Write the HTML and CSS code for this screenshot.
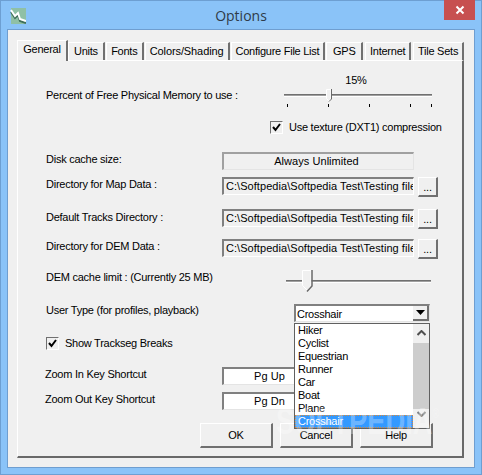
FILE: index.html
```html
<!DOCTYPE html>
<html lang="en">
<head>
  <meta charset="UTF-8">
  <title>Options</title>
  <link rel="stylesheet" href="styles.css">
</head>
<body>
  <div class="window">
    <!-- title bar -->
    <div class="titlebar">
      <svg class="app-icon" width="16" height="17" viewBox="0 0 16 17">
        <rect x="1" y="1" width="15" height="16" fill="#8fc0a6"/>
        <path d="M1 5 L5 11 L8 8 L10 14 L16 16" fill="none" stroke="#3f6f5a" stroke-width="2"/>
        <path d="M1 3 L5 9 L8 6 L10 12 L16 14" fill="none" stroke="#fff" stroke-width="2"/>
      </svg>
      <div class="title">Options</div>
      <div class="close">
        <svg width="10" height="10" viewBox="0 0 10 10"><path d="M1.5 1.5 L8.5 8.5 M8.5 1.5 L1.5 8.5" stroke="#fff" stroke-width="2"/></svg>
      </div>
    </div>
    <div class="client">
      <!-- tabs -->
      <div class="tabs">
        <div class="tab tab-active tab-general">General</div>
        <div class="tab tab-units">Units</div>
        <div class="tab tab-fonts">Fonts</div>
        <div class="tab tab-colors">Colors/Shading</div>
        <div class="tab tab-config">Configure File List</div>
        <div class="tab tab-gps">GPS</div>
        <div class="tab tab-internet">Internet</div>
        <div class="tab tab-tiles">Tile Sets</div>
      </div>
      <!-- general page -->
      <div class="panel">
        <div class="row row-memory">
          <span class="label label-memory">Percent of Free Physical Memory to use :</span>
          <div class="memory">
            <div class="percent">15%</div>
            <div class="slider slider-small">
              <div class="track"></div>
              <svg class="thumb thumb-small" width="6" height="13" viewBox="0 0 6 13">
                <path d="M0.5 0.5 H5 V9.5 L3 12 L0.5 9.5 Z" fill="#f0f0f0" stroke="#fff"/>
                <path d="M5.5 0 V10 L3 12.5" fill="none" stroke="#696969"/>
              </svg>
            </div>
            <div class="ticks"><i></i><i></i><i></i><i></i><i></i></div>
          </div>
        </div>
        <label class="check check-texture"><span class="box">
          <svg width="9" height="9" viewBox="0 0 9 9"><path d="M1 4 L3.5 7 L8 1" fill="none" stroke="#000" stroke-width="2"/></svg>
        </span>Use texture (DXT1) compression</label>

        <div class="row row-disk">
          <span class="label label-up">Disk cache size:</span>
          <div class="field field-center">Always Unlimited</div>
        </div>
        <div class="row row-map">
          <span class="label label-up">Directory for Map Data :</span>
          <div class="field">C:\Softpedia\Softpedia Test\Testing files</div>
          <div class="btn btn-browse">...</div>
        </div>
        <div class="row row-tracks">
          <span class="label label-up-small">Default Tracks Directory :</span>
          <div class="field">C:\Softpedia\Softpedia Test\Testing files</div>
          <div class="btn btn-browse">...</div>
        </div>
        <div class="row row-dem">
          <span class="label label-up">Directory for DEM Data :</span>
          <div class="field">C:\Softpedia\Softpedia Test\Testing files</div>
          <div class="btn btn-browse">...</div>
        </div>
        <div class="row row-cache">
          <span class="label label-cache">DEM cache limit : (Currently 25 MB)</span>
          <div class="slider slider-large">
            <div class="track"></div>
            <svg class="thumb thumb-large" width="11" height="22" viewBox="0 0 11 22">
              <path d="M0.5 0.5 H9 V15.5 L5.5 20.5 L0.5 15.5 Z" fill="#f0f0f0" stroke="#fff"/>
              <path d="M10 0 V16 L5 21.5" fill="none" stroke="#696969" stroke-width="1.5"/>
            </svg>
          </div>
        </div>
        <div class="row row-user">
          <span class="label label-user">User Type (for profiles, playback)</span>
          <div class="combo">
            <span class="combo-text">Crosshair</span>
            <span class="combo-btn"><svg width="9" height="5" viewBox="0 0 9 5"><path d="M0 0 H9 L4.5 5 Z" fill="#000"/></svg></span>
            <!-- open drop-down -->
            <div class="list">
              <div class="items">
                <div class="item">Hiker</div>
                <div class="item">Cyclist</div>
                <div class="item">Equestrian</div>
                <div class="item">Runner</div>
                <div class="item">Car</div>
                <div class="item">Boat</div>
                <div class="item">Plane</div>
                <div class="item item-selected">Crosshair</div>
              </div>
              <div class="scrollbar">
                <svg width="9" height="6" viewBox="0 0 9 6"><path d="M0.5 5 L4.5 1 L8.5 5" fill="none" stroke="#505050" stroke-width="2"/></svg>
                <div class="scroll-thumb"></div>
                <svg width="9" height="6" viewBox="0 0 9 6"><path d="M0.5 1 L4.5 5 L8.5 1" fill="none" stroke="#808080" stroke-width="2"/></svg>
              </div>
            </div>
          </div>
        </div>
        <label class="check check-breaks"><span class="box">
          <svg width="9" height="9" viewBox="0 0 9 9"><path d="M1 4 L3.5 7 L8 1" fill="none" stroke="#000" stroke-width="2"/></svg>
        </span>Show Trackseg Breaks</label>
        <div class="row row-zoomin">
          <span class="label label-zoom">Zoom In Key Shortcut</span>
          <div class="key">Pg Up</div>
        </div>
        <div class="row row-zoomout">
          <span class="label label-zoom">Zoom Out Key Shortcut</span>
          <div class="key">Pg Dn</div>
        </div>
        <div class="actions">
          <div class="btn btn-action">OK</div>
          <div class="btn btn-action">Cancel</div>
          <div class="btn btn-action">Help</div>
        </div>
        <div class="watermark">SOFTPEDIA<sup>®</sup></div>
      </div>
    </div>
  </div>
</body>
</html>
```

FILE: styles.css
```css
html, body {
  margin: 0;
  padding: 0;
  width: 482px;
  height: 475px;
  overflow: hidden;
}
body {
  font-family: "Liberation Sans", Arial, sans-serif;
  font-size: 11px;
  letter-spacing: -0.25px;
  color: #000;
}
.window {
  width: 482px;
  height: 475px;
  box-sizing: border-box;
  background-color: #8ac3f8;
  border: 1px solid #6d9fd2;
  display: flex;
  flex-direction: column;
}
/* title bar */
.titlebar {
  height: 29px;
  flex: none;
  display: flex;
  align-items: flex-start;
  position: relative;
}
.app-icon {
  margin: 6px 0 0 9px;
}
.title {
  position: absolute;
  left: 0;
  right: 0;
  top: 5px;
  text-align: center;
  font-family: "Open Sans", sans-serif;
  font-size: 14px;
  letter-spacing: 0;
  line-height: 20px;
  color: #2f3b48;
}
.close {
  margin-left: auto;
  margin-right: 6px;
  width: 31px;
  height: 20px;
  margin-top: -1px;
  background-color: #c75050;
  display: flex;
  align-items: center;
  justify-content: center;
}
.client {
  flex: 1;
  margin: 0 7px 7px 7px;
  padding: 10px 9px 0 9px;
  background-color: #f0f0f0;
  box-shadow: 0 0 0 1px #6f9ed0;
}
/* tabs */
.tabs {
  display: flex;
  align-items: flex-end;
  height: 20px;
  position: relative;
  z-index: 1;
}
.tab {
  box-sizing: border-box;
  height: 18px;
  margin-right: 1px;
  text-align: center;
  line-height: 17px;
  white-space: nowrap;
  background-color: #f0f0f0;
  border-top: 1px solid #fff;
  border-left: 1px solid #fff;
  border-right: 2px solid #707070;
}
.tab-active {
  height: 21px;
  margin-bottom: -1px;
  line-height: 17px;
  padding-bottom: 3px;
}
.tab-general { width: 51px; margin-right: 0; }
.tab-units { width: 37px; }
.tab-fonts { width: 38px; }
.tab-colors { width: 85px; letter-spacing: -0.1px; }
.tab-config { width: 95px; }
.tab-gps { width: 37px; margin-right: 2px; }
.tab-internet { width: 46px; margin-right: 2px; }
.tab-tiles { width: 51px; }
/* page */
.panel {
  box-sizing: border-box;
  position: relative;
  width: 447px;
  height: 398px;
  padding: 0 0 0 28px;
  background-color: #f0f0f0;
  border-top: 1px solid #fff;
  border-left: 1px solid #fff;
  border-right: 2px solid #696969;
  border-bottom: 2px solid #696969;
}
.row {
  display: flex;
  align-items: center;
  height: 18px;
}
.label {
  flex: none;
  width: 176px;
  white-space: nowrap;
}
.label-up {
  position: relative;
  top: -2px;
}
.label-up-small {
  position: relative;
  top: -1px;
}
.row-memory {
  height: 36px;
  margin-top: 12px;
  align-items: flex-start;
}
.label-memory {
  width: 238px;
  margin-top: 16px;
}
.memory {
  width: 148px;
}
.percent {
  text-align: center;
  height: 15px;
  line-height: 14px;
  padding-right: 4px;
}
.slider {
  position: relative;
}
.slider-small {
  height: 14px;
  display: flex;
  align-items: center;
}
.track {
  width: 100%;
  box-sizing: border-box;
  height: 3px;
  background-color: #a0a0a0;
  border-top: 1px solid #707070;
  border-bottom: 1px solid #fff;
}
.thumb {
  position: absolute;
  top: 0;
}
.thumb-small {
  left: 42px;
  top: 1px;
}
.ticks {
  display: flex;
  gap: 40px;
  padding: 2px 0 0 3px;
}
.ticks i {
  width: 1px;
  height: 3px;
  background-color: #000;
}
.ticks i:last-child {
  margin-left: -20px;
}
.check {
  display: flex;
  align-items: center;
  gap: 6px;
  height: 14px;
}
.check-texture {
  margin: 11px 0 0 224px;
}
.check-breaks {
  margin-top: 14px;
}
.box {
  box-sizing: border-box;
  width: 13px;
  height: 13px;
  background-color: #f0f0f0;
  border-top: 1px solid #707070;
  border-left: 1px solid #707070;
  border-bottom: 1px solid #fff;
  border-right: 1px solid #fff;
  display: flex;
  align-items: center;
  justify-content: center;
}
.row-disk { margin-top: 18px; }
.row-map { margin-top: 7px; }
.row-tracks { margin-top: 14px; }
.row-dem { margin-top: 12px; }
.row-cache { margin-top: 12px; height: 24px; }
.row-user { margin-top: 11px; position: relative; z-index: 2; }
.row-zoomin { margin-top: 17px; }
.row-zoomout { margin-top: 7px; }
.label-cache { width: 239px; margin-top: -8px; }
.label-user { width: 248px; margin-top: -6px; }
.label-zoom { margin-left: -1px; width: 177px; margin-top: -5px; }
.field {
  box-sizing: border-box;
  width: 192px;
  height: 18px;
  flex: none;
  padding-left: 2px;
  line-height: 15px;
  letter-spacing: 0.05px;
  white-space: nowrap;
  overflow: hidden;
  background-color: #f0f0f0;
  border-top: 2px solid #808080;
  border-left: 2px solid #808080;
  border-bottom: 1px solid #fff;
  border-right: 1px solid #fff;
}
.field-center {
  text-align: center;
  padding: 0 4px 0 0;
  border-color: #a0a0a0 #e4e4e4 #e4e4e4 #a0a0a0;
}
.btn {
  box-sizing: border-box;
  display: flex;
  align-items: center;
  justify-content: center;
  background-color: #f0f0f0;
  border-top: 1px solid #fff;
  border-left: 1px solid #fff;
  border-right: 2px solid #707070;
  border-bottom: 2px solid #707070;
}
.btn-browse {
  width: 20px;
  height: 20px;
  margin-left: 4px;
  align-self: flex-start;
}
.slider-large {
  width: 145px;
  margin-left: 1px;
  height: 22px;
  display: flex;
  align-items: center;
}
.thumb-large {
  left: 16px;
  top: 0;
}
.combo {
  box-sizing: border-box;
  position: relative;
  flex: none;
  width: 136px;
  height: 18px;
  display: flex;
  align-items: center;
  background-color: #fff;
  border-top: 2px solid #808080;
  border-left: 2px solid #808080;
  border-right: 1px solid #e4e4e4;
  border-bottom: 1px solid #e4e4e4;
}
.combo-text {
  flex: 1;
  padding-left: 1px;
}
.combo-btn {
  box-sizing: border-box;
  width: 16px;
  height: 15px;
  display: flex;
  align-items: center;
  justify-content: center;
  background-color: #f0f0f0;
  border-right: 2px solid #707070;
  border-bottom: 2px solid #707070;
}
.list {
  box-sizing: border-box;
  position: absolute;
  left: -2px;
  top: 17px;
  width: 136px;
  height: 106px;
  display: flex;
  background-color: #fff;
  border: 1px solid #606060;
}
.items {
  flex: 1;
}
.item {
  height: 13px;
  line-height: 13px;
  padding-left: 3px;
}
.item-selected {
  width: 118px;
  box-sizing: border-box;
  color: #fff;
  background-color: #3399ff;
  outline: 1px dotted #d98a3a;
  outline-offset: -1px;
}
.scrollbar {
  width: 16px;
  flex: none;
  background-color: #f0f0f0;
  display: flex;
  flex-direction: column;
  align-items: center;
  padding-top: 6px;
  box-sizing: border-box;
}
.scroll-thumb {
  width: 100%;
  height: 66px;
  margin: 7px 0 2px 0;
  background-color: #cdcdcd;
}
.key {
  box-sizing: border-box;
  flex: none;
  width: 96px;
  height: 18px;
  line-height: 15px;
  letter-spacing: 0.1px;
  padding-right: 3px;
  text-align: center;
  background-color: #fff;
  border-top: 2px solid #808080;
  border-left: 2px solid #808080;
  border-bottom: 1px solid #e4e4e4;
}
.actions {
  display: flex;
  gap: 7px;
  margin: 13px 0 0 154px;
}
.btn-action {
  width: 73px;
  height: 25px;
  position: relative;
}
/* watermark over the dialog */
.watermark {
  position: absolute;
  left: 258px;
  top: 343px;
  font-weight: bold;
  font-size: 36px;
  letter-spacing: 0;
  line-height: 36px;
  white-space: nowrap;
  color: rgba(255, 255, 255, 0.3);
  transform: scaleX(0.76);
  transform-origin: left top;
  z-index: 3;
  pointer-events: none;
}
.watermark sup {
  font-size: 12px;
  font-weight: normal;
  vertical-align: 16px;
  line-height: 0;
}
```
